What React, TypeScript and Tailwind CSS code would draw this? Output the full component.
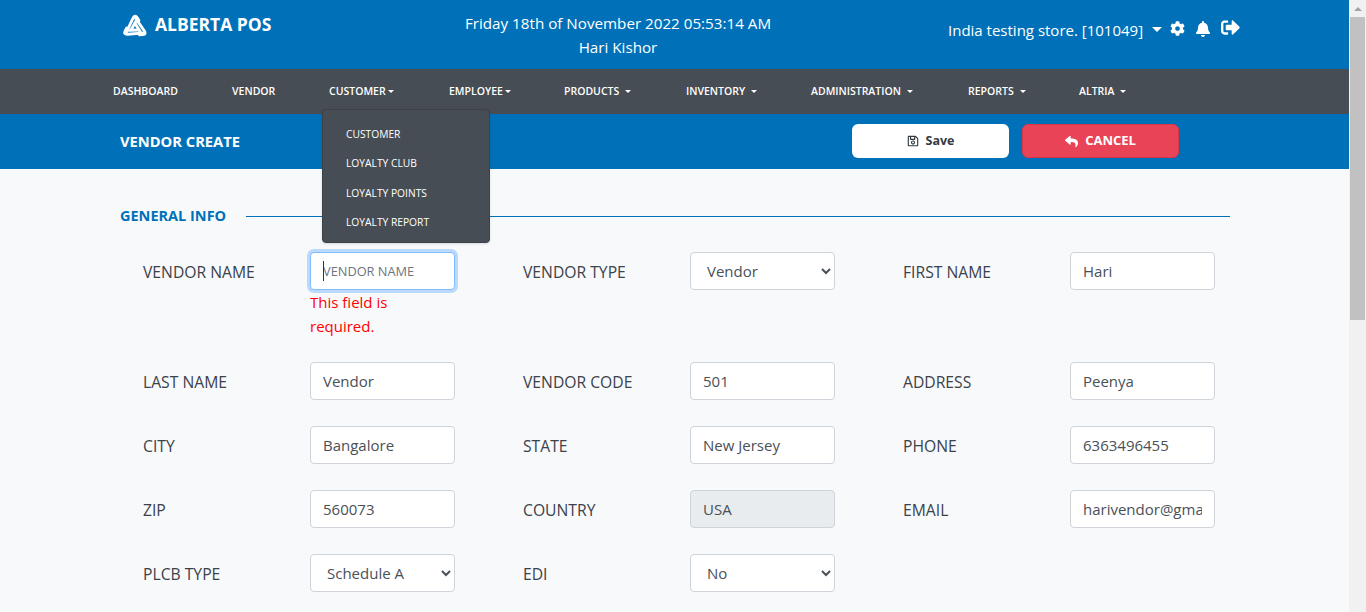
import { FaBell, FaCog, FaRegSave, FaReply, FaSignOutAlt } from "react-icons/fa";

const navItems = [
  { label: "DASHBOARD", width: "w-[119px]" },
  { label: "VENDOR", width: "w-[97px]" },
  { label: "CUSTOMER", width: "w-[120px]", caret: "tight" },
  { label: "EMPLOYEE", width: "w-[115px]", caret: "tight" },
  { label: "PRODUCTS", width: "w-[122px]", caret: "wide" },
  { label: "INVENTORY", width: "w-[125px]", caret: "wide" },
  { label: "ADMINISTRATION", width: "w-[157px]", caret: "wide" },
  { label: "REPORTS", width: "w-[111px]", caret: "wide" },
  { label: "ALTRIA", width: "w-[60px]", caret: "wide" },
];

const menuItems = ["CUSTOMER", "LOYALTY CLUB", "LOYALTY POINTS", "LOYALTY REPORT"];

const fieldBase = "h-[38px] w-[145px] rounded-[4px] border border-[#ced4da] px-3 text-[15px] text-[#495057] outline-none";
const inputClass = `${fieldBase} bg-white`;
const disabledClass = `${fieldBase} bg-[#e9ecef]`;

function Logo() {
  const blade = "M5 19.5 L11.4 6 Q13 3 14.8 5.6 L16.4 8.2 Q15 6.8 13.8 8.8 L9.6 16.5";
  return (
    <svg width="30" height="30" viewBox="0 0 26 26" fill="none" stroke="white" strokeWidth="2.5" strokeLinecap="round" strokeLinejoin="round">
      <path d={blade} />
      <path d={blade} transform="rotate(120 13 14.5)" />
      <path d={blade} transform="rotate(240 13 14.5)" />
    </svg>
  );
}

function Label({ children }: { children: string }) {
  return <div className="flex h-[38px] items-center pt-[4px] text-[15.7px] text-[#3b4249]">{children}</div>;
}

function TextField({ label, value }: { label: string; value: string }) {
  return (
    <>
      <Label>{label}</Label>
      <input className={inputClass} defaultValue={value} />
    </>
  );
}

function SelectField({ label, value, options }: { label: string; value: string; options: string[] }) {
  return (
    <>
      <Label>{label}</Label>
      <select className={inputClass} defaultValue={value}>
        {options.map((o) => (
          <option key={o}>{o}</option>
        ))}
      </select>
    </>
  );
}

export default function App() {
  return (
    <div className="flex h-[612px] w-[1366px] overflow-hidden font-['Open_Sans',sans-serif]">
      <div className="relative w-[1349px] bg-[#f8f9fa]">
        <header className="flex h-[69px] items-start bg-[#0071b9] text-white">
          <div className="flex w-[340px] items-center gap-[5px] pl-[120px] pt-[11px]">
            <Logo />
            <span className="-mt-[3px] text-[17.5px] font-bold">ALBERTA POS</span>
          </div>
          <div className="w-[556px] pt-[11px] text-center text-[15.2px] leading-[24px]">
            <div>Friday 18th of November 2022 05:53:14 AM</div>
            <div>Hari Kishor</div>
          </div>
          <div className="flex items-center pl-[52px] pt-[18px]">
            <span className="text-[15px] leading-[24px]">India testing store. [101049]</span>
            <span className="ml-[9px] -mt-[2px] h-0 w-0 border-x-[5px] border-t-[5px] border-x-transparent border-t-white" />
            <FaCog className="ml-[8px] -mt-[3px] text-[15px]" />
            <FaBell className="ml-[10px] -mt-[3px] text-[16px]" />
            <FaSignOutAlt className="ml-[10px] -mt-[5px] text-[19px]" />
          </div>
        </header>

        <nav className="flex h-[45px] items-center bg-[#474d54] pl-[113px] text-[10.5px] font-semibold text-white">
          {navItems.map((item) => (
            <div key={item.label} className={`flex shrink-0 items-center ${item.width}`}>
              <span>{item.label}</span>
              {item.caret && (
                <span
                  className={`h-0 w-0 border-x-[3px] border-t-[3px] border-x-transparent border-t-white ${item.caret === "wide" ? "ml-[6px]" : "ml-[2px]"}`}
                />
              )}
            </div>
          ))}
        </nav>

        <div className="flex h-[55px] items-center bg-[#0071b9] pb-[1px] pl-[120px]">
          <span className="w-[732px] text-[14.7px] font-bold text-white">VENDOR CREATE</span>
          <button className="flex h-[34px] w-[157px] items-center justify-center gap-[7px] rounded-[6px] bg-white text-[12.5px] font-bold text-[#343a40]">
            <FaRegSave className="text-[12px]" />
            Save
          </button>
          <button className="ml-[13px] flex h-[34px] w-[157px] items-center justify-center gap-[7px] rounded-[6px] border border-[#dc3545] bg-[#e84357] text-[13px] font-bold text-white">
            <FaReply className="text-[13px]" />
            CANCEL
          </button>
        </div>

        <main className="px-[120px] pt-[37px]">
          <div className="flex h-[21px] w-[1110px] items-center">
            <span className="-mt-px text-[14.5px] font-bold text-[#0071b9]">GENERAL INFO</span>
            <div className="ml-[20px] h-px flex-1 bg-[#0071b9]" />
          </div>
          <div className="grid grid-cols-[167px_145px_68px_167px_145px_68px_167px_145px] grid-rows-[84px_38px_38px_38px_38px] gap-y-[26px] pl-[23px] pt-[25px]">
            <Label>VENDOR NAME</Label>
            <div>
              <div className="relative">
                <input
                  className="h-[38px] w-[145px] rounded-[4px] border border-[#80bdff] bg-white px-3 text-[12.8px] text-[#495057] shadow-[0_0_0_3px_rgba(0,123,255,0.25)] outline-none placeholder:text-[#6c757d]"
                  placeholder="VENDOR NAME"
                />
                <span className="absolute left-[13px] top-[9px] h-[20px] w-px bg-[#333]" />
              </div>
              <div className="text-[15px] leading-[24px] text-[#ff0000]">
                This field is
                <br />
                required.
              </div>
            </div>
            <div />
            <SelectField label="VENDOR TYPE" value="Vendor" options={["Vendor"]} />
            <div />
            <TextField label="FIRST NAME" value="Hari" />

            <TextField label="LAST NAME" value="Vendor" />
            <div />
            <TextField label="VENDOR CODE" value="501" />
            <div />
            <TextField label="ADDRESS" value="Peenya" />

            <TextField label="CITY" value="Bangalore" />
            <div />
            <TextField label="STATE" value="New Jersey" />
            <div />
            <TextField label="PHONE" value="6363496455" />

            <TextField label="ZIP" value="560073" />
            <div />
            <Label>COUNTRY</Label>
            <input className={disabledClass} defaultValue="USA" disabled />
            <div />
            <TextField label="EMAIL" value="harivendor@gmail.com" />

            <SelectField label="PLCB TYPE" value="Schedule A" options={["Schedule A"]} />
            <div />
            <SelectField label="EDI" value="No" options={["No"]} />
          </div>
        </main>

        <div className="absolute left-[322px] top-[109px] h-[134px] w-[168px] rounded-[4px] border border-[#3d4248] bg-[#474d54] pt-[10px] shadow-sm">
          {menuItems.map((item) => (
            <div key={item} className="flex h-[29.4px] items-center pl-[23px] text-[10.25px] font-medium text-white">
              {item}
            </div>
          ))}
        </div>
      </div>

      <div className="flex w-[17px] flex-col bg-[#f1f1f1]">
        <div className="flex h-[17px] items-center justify-center">
          <span className="h-0 w-0 border-x-[4px] border-b-[4px] border-x-transparent border-b-[#a3a3a3]" />
        </div>
        <div className="mx-[1px] h-[303px] bg-[#c1c1c1]" />
      </div>
    </div>
  );
}
